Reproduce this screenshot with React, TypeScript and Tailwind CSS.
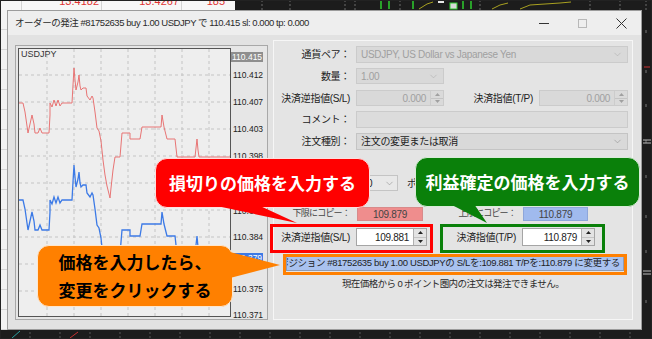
import React from 'react';
import { ChevronDown } from 'lucide-react';

const UI = "font-['Liberation_Sans','Noto_Sans_CJK_JP',sans-serif]";
const JP = "font-['Noto_Sans_CJK_JP',sans-serif]";

// ask price line, page coordinates; the bid line is the same shape shifted down
const ask: [number, number][] = [
  [19, 103], [23, 103], [25, 112], [28, 133], [30, 124], [32, 115], [34, 124], [35, 133], [38, 133], [40, 128],
  [42, 133], [49, 133], [50, 115], [50, 103], [52, 107], [54, 100], [56, 106], [58, 100], [60, 106], [62, 103],
  [72, 103], [73, 85], [74, 68], [75, 80], [76, 90], [78, 82], [79, 75], [80, 86], [81, 90], [83, 88], [86, 88],
  [87, 96], [90, 100], [92, 96], [93, 98], [95, 112], [97, 128], [99, 131], [101, 141], [103, 160], [105, 175],
  [107, 186], [110, 198], [111, 188], [113, 170], [115, 157], [120, 157], [122, 133], [130, 133], [130, 139],
  [140, 139], [142, 127], [161, 127], [162, 115], [164, 127], [167, 139], [175, 139], [177, 157], [195, 157],
  [196, 148], [197, 139], [198, 150], [199, 157], [230, 157],
];

const pts = (dy: number) => ask.map(([x, y]) => `${x},${y + dy}`).join(' ');

const axisLabels = [
  { v: '110.412', y: 75 },
  { v: '110.407', y: 102 },
  { v: '110.403', y: 129 },
  { v: '110.398', y: 156 },
  { v: '110.389', y: 211 },
  { v: '110.384', y: 237 },
  { v: '110.375', y: 289 },
  { v: '110.371', y: 315 },
];

const Spin = ({ disabled }: { disabled?: boolean }) => (
  <div
    className={`flex w-[13px] shrink-0 flex-col border-l ${
      disabled ? 'border-[#cccccc] bg-[#dadada]' : 'border-[#b0b0b0] bg-[#e3e3e3]'
    }`}
  >
    <div className="flex flex-1 items-center justify-center border-b border-[#c4c4c4]">
      <svg width="5" height="3" viewBox="0 0 5 3">
        <path d="M0 3 L2.5 0 L5 3 Z" fill={disabled ? '#a0a0a0' : '#222'} />
      </svg>
    </div>
    <div className="flex flex-1 items-center justify-center">
      <svg width="5" height="3" viewBox="0 0 5 3">
        <path d="M0 0 L2.5 3 L5 0 Z" fill={disabled ? '#a0a0a0' : '#222'} />
      </svg>
    </div>
  </div>
);

const App = () => {
  return (
    <div className={`relative h-[339px] w-[652px] overflow-hidden bg-[#1c1c1c] ${UI}`}>
      {/* desktop behind the dialog: spreadsheet on the left, dark chart on the right */}
      <div className="absolute left-0 top-0 flex h-[10px] w-[235px] overflow-hidden bg-[#f7f7f7] text-[11px] leading-[13px] text-[#e03232]">
        <div className="h-full w-[22px] border-r border-[#d4d4d4]" />
        <div className="-mt-[5px] w-[80px] border-r border-[#d4d4d4] pr-[2px] text-right">13.4182</div>
        <div className="-mt-[5px] w-[80px] border-r border-[#d4d4d4] pr-[2px] text-right">13.4267</div>
        <div className="-mt-[5px] w-[46px] pr-[3px] text-right">185</div>
      </div>
      <div className="absolute left-0 top-[10px] flex h-[320px] w-[7px] flex-col bg-[#f2f2f2]">
        {Array.from({ length: 16 }).map((_, i) => (
          <div key={i} className="h-[20px] shrink-0 border-b border-[#d6d6d6]" />
        ))}
      </div>
      <svg className="absolute left-0 top-0" width="652" height="339" viewBox="0 0 652 339">
        {[262, 290, 345, 355, 400, 480, 590, 620, 646].map((x) => (
          <line key={x} x1={x} y1="0" x2={x} y2="10" stroke="#6a6a6a" strokeDasharray="2 2" />
        ))}
        {[381, 389, 413, 463, 471].map((x) => (
          <line key={x} x1={x} y1="0" x2={x} y2="9" stroke="#2ecc2e" strokeWidth="1.5" />
        ))}
        <rect x="438" y="0" width="6" height="3" fill="#e8e8e8" />
        <rect x="450" y="3" width="7" height="6" fill="#d8d8d8" stroke="#2ecc2e" />
        <polyline points="419,9 427,4 433,2" fill="none" stroke="#a8a020" />
        <polyline points="492,9 500,5 508,3" fill="none" stroke="#a8a020" />
        <polyline points="520,9 530,5 545,4 560,3 571,2" fill="none" stroke="#a8a020" />
        {[30, 70, 104, 140, 175, 215, 250, 300].map((y) => (
          <line key={y} x1="646" y1={y} x2="646" y2={y + 3} stroke="#777" />
        ))}
        <line x1="644" y1="67" x2="650" y2="67" stroke="#c83030" />
        <line x1="643" y1="140" x2="651" y2="140" stroke="#bbb" />
        <line x1="643" y1="143" x2="651" y2="143" stroke="#bbb" />
        <line x1="643" y1="271" x2="651" y2="271" stroke="#bbb" />
        <line x1="643" y1="274" x2="651" y2="274" stroke="#bbb" />
        {[30, 60, 90, 120, 150, 180, 210, 240, 270, 300, 330, 360, 390, 420, 450, 480, 510, 540, 570, 600, 630].map((x) => (
          <line key={x} x1={x} y1="332" x2={x} y2="339" stroke="#555" strokeDasharray="2 2" />
        ))}
        <line x1="12" y1="338" x2="20" y2="331" stroke="#2aa0a0" />
        <line x1="70" y1="338" x2="78" y2="332" stroke="#c83030" />
      </svg>

      {/* dialog window */}
      <div className="absolute left-[7px] top-[10px] flex h-[320px] w-[635px] flex-col border border-[#9c9c9c] bg-[#e2e2e2]">
        <div className="flex h-[24px] shrink-0 items-center bg-[#eeeeee]">
          <div className="flex-1 pl-[7px] text-[9.5px] tracking-[-0.45px] text-[#2b2b2b]">
            オーダーの発注 #81752635 buy 1.00 USDJPY で 110.415 sl: 0.000 tp: 0.000
          </div>
          <div className="flex h-full w-[117px]">
            <div className="flex w-[39px] items-center justify-center">
              <div className="h-px w-[10px] bg-[#333]" />
            </div>
            <div className="flex w-[39px] items-center justify-center">
              <div className="h-[9px] w-[9px] border border-[#b8b8b8]" />
            </div>
            <div className="flex w-[39px] items-center justify-center">
              <svg width="11" height="11" viewBox="0 0 11 11">
                <path d="M0.5 0.5 L10.5 10.5 M10.5 0.5 L0.5 10.5" stroke="#333" strokeWidth="1" />
              </svg>
            </div>
          </div>
        </div>

        <div className="flex flex-1 items-start pl-[7px]">
          {/* tick chart */}
          <div className="mt-[10px] flex h-[275px] w-[253px] border border-[#a8a8a8] bg-[#e6e6e6] p-[2px]">
            <div className="relative h-full w-[213px] border border-[#555] bg-[#eeeeee]">
              <svg className="absolute inset-0" width="211" height="267" viewBox="19 49 211 267">
                {[75, 102, 129, 156, 183, 210, 237, 264, 291].map((y) => (
                  <line key={y} x1="19" y1={y} x2="230" y2={y} stroke="#c4c4c4" strokeDasharray="3 3" />
                ))}
                {[47, 74, 101, 128, 155, 182, 209].map((x) => (
                  <line key={x} x1={x} y1="49" x2={x} y2="316" stroke="#c4c4c4" strokeDasharray="3 3" />
                ))}
                <polyline points={pts(0)} fill="none" stroke="#e87474" strokeWidth="1" />
                <polyline points={pts(97)} fill="none" stroke="#3c7ae6" strokeWidth="1.3" />
              </svg>
              <div className="absolute left-[2px] top-[0px] text-[9px] leading-[10px] text-[#333]">USDJPY</div>
            </div>
            <div className="relative h-full flex-1 text-[8.5px] leading-[10px] text-[#222]">
              <div className="absolute left-[0px] top-[4px] bg-[#8e8e8e] px-[1px] text-white">110.415</div>
              {axisLabels.map((l) => (
                <div key={l.v} className="absolute left-[2px] flex items-center" style={{ top: l.y - 48 - 5 }}>
                  {l.v}
                </div>
              ))}
              <div className="absolute left-[0px] top-[205px] bg-[#3c7ae6] px-[1px] text-white">110.379</div>
            </div>
          </div>

          {/* order form */}
          <div className="ml-[5px] mt-[5px] flex h-[280px] w-[360px] flex-col border border-[#f6f6f6] bg-[#e4e4e4] text-[10px] tracking-[-0.3px] text-[#222]">
            <div className="mt-[5px] flex h-[17px] items-center">
              <div className="w-[76px] text-right">通貨ペア：</div>
              <div className="ml-[6px] flex h-full w-[272px] items-center border border-[#cbcbcb] bg-[#d9d9d9] px-[4px] text-[#a0a0a0]">
                <span className="flex-1">USDJPY, US Dollar vs Japanese Yen</span>
                <ChevronDown size={11} strokeWidth={1.2} className="text-[#aaaaaa]" />
              </div>
            </div>
            <div className="mt-[5px] flex h-[16px] items-center">
              <div className="w-[76px] text-right">数量：</div>
              <div className="ml-[6px] flex h-full w-[88px] items-center border border-[#cbcbcb] bg-[#d9d9d9] px-[4px] text-[#a0a0a0]">
                <span className="flex-1">1.00</span>
                <ChevronDown size={11} strokeWidth={1.2} className="text-[#aaaaaa]" />
              </div>
            </div>
            <div className="mt-[6px] flex h-[16px] items-center">
              <div className="w-[76px] text-right">決済逆指値(S/L)</div>
              <div className="ml-[6px] flex h-full w-[88px] border border-[#cbcbcb] bg-[#d9d9d9] text-[#a0a0a0]">
                <span className="flex flex-1 items-center justify-end pr-[4px]">0.000</span>
                <Spin disabled />
              </div>
              <div className="w-[89px] text-right">決済指値(T/P)</div>
              <div className="ml-[6px] flex h-full w-[89px] border border-[#cbcbcb] bg-[#d9d9d9] text-[#a0a0a0]">
                <span className="flex flex-1 items-center justify-end pr-[4px]">0.000</span>
                <Spin disabled />
              </div>
            </div>
            <div className="mt-[5px] flex h-[17px] items-center">
              <div className="w-[76px] text-right">コメント：</div>
              <div className="ml-[6px] h-full w-[272px] border border-[#cbcbcb] bg-[#dcdcdc]" />
            </div>
            <div className="mt-[5px] flex h-[17px] items-center">
              <div className="w-[76px] text-right">注文種別：</div>
              <div className="ml-[6px] flex h-full w-[272px] items-center border border-[#c4c4c4] bg-[#d9d9d9] px-[4px]">
                <span className="flex-1">注文の変更または取消</span>
                <ChevronDown size={11} strokeWidth={1.2} className="text-[#888]" />
              </div>
            </div>
            <div className="mt-[25px] flex h-[16px] items-center">
              <div className="w-[76px]" />
              <div className="ml-[6px] flex h-full w-[42px] items-center border border-[#c4c4c4] bg-[#e8e8e8] pl-[10px] pr-[2px]">
                <span className="flex-1">0</span>
                <ChevronDown size={11} strokeWidth={1.2} className="text-[#888]" />
              </div>
              <div className="ml-[9px]">ポイント</div>
            </div>
            <div className="mt-[16px] flex h-[14px] items-center text-[#444]">
              <div className="w-[76px] text-right text-[9px] tracking-[-0.8px]">下限にコピー：</div>
              <div className="ml-[7px] flex h-full w-[66px] items-center justify-center border border-[#d88a8a] bg-[#ef8d8d]">
                109.879
              </div>
              <div className="w-[93px] text-right text-[9px] tracking-[-0.8px]">上限にコピー：</div>
              <div className="ml-[7px] flex h-full w-[65px] items-center justify-center border border-[#8ea6da] bg-[#a0baee]">
                110.879
              </div>
            </div>
            <div className="mt-[7px] flex h-[18px] items-center">
              <div className="w-[76px] text-right">決済逆指値(S/L)</div>
              <div className="ml-[6px] flex h-full border border-[#a5a5a5] bg-white">
                <span className="flex w-[56px] items-center justify-end pr-[4px]">109.881</span>
                <Spin />
              </div>
              <div className="w-[89px] text-right">決済指値(T/P)</div>
              <div className="ml-[6px] flex h-full border border-[#a5a5a5] bg-white">
                <span className="flex w-[58px] items-center justify-end pr-[4px]">110.879</span>
                <Spin />
              </div>
            </div>
            <div className="ml-[12px] mt-[10px] flex h-[15px] w-[338px] items-center justify-end overflow-hidden whitespace-nowrap border border-[#8f9bb3] bg-[#a9c2ef] pr-[3px] text-[9.5px] tracking-[-0.35px] text-[#1e1e1e]">
              ポジション #81752635 buy 1.00 USDJPYの S/Lを:109.881 T/Pを:110.879 に変更する
            </div>
            <div className="mt-[6px] text-center text-[9.5px] tracking-[-0.6px] text-[#2a2a2a]">
              現在価格から 0 ポイント圏内の注文は発注できません。
            </div>
          </div>
        </div>
      </div>

      {/* annotations */}
      <div className="absolute left-[270px] top-[224px] h-[29px] w-[163px] border-[3px] border-[#ff0000]" />
      <div className="absolute left-[440px] top-[224px] h-[29px] w-[165px] border-[3px] border-[#0a800a]" />
      <div className="absolute left-[283px] top-[254px] h-[21px] w-[344px] border-[3px] border-[#ff8000]" />

      <div
        className={`absolute left-[155px] top-[158px] flex h-[50px] w-[215px] items-center justify-center rounded-[12px] border border-[#ffdede] bg-[#ff0000] text-[17px] font-bold text-white ${JP}`}
      >
        損切りの価格を入力する
      </div>
      <div
        className={`absolute left-[415px] top-[157px] flex h-[50px] w-[225px] items-center justify-center rounded-[12px] border border-[#d8ecd8] bg-[#0a800a] text-[17px] font-bold text-white ${JP}`}
      >
        利益確定の価格を入力する
      </div>
      <div
        className={`absolute left-[37px] top-[245px] flex h-[62px] w-[196px] flex-col items-center justify-center rounded-[12px] border border-[#ffe6cc] bg-[#ff8000] text-[17px] font-bold leading-[28px] text-black ${JP}`}
      >
        <span>価格を入力したら、</span>
        <span>変更をクリックする</span>
      </div>
      <svg className="pointer-events-none absolute left-0 top-0" width="652" height="339" viewBox="0 0 652 339">
        <polygon points="160,194 297,223 258,205" fill="#ff0000" />
        <polygon points="450,204 487,223 474,204" fill="#0a800a" />
        <polygon points="230,252 280,265 230,278" fill="#ff8000" />
      </svg>

      <div className="pointer-events-none absolute inset-0 border border-[#222]" />
    </div>
  );
};

export default App;
